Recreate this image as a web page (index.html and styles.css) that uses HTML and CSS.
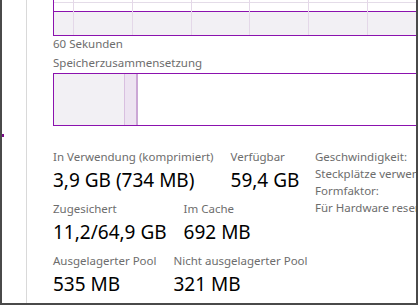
FILE: index.html
```html
<!DOCTYPE html>
<html lang="de">
<head>
<meta charset="utf-8">
<link rel="stylesheet" href="styles.css">
</head>
<body>
<div class="window">
  <div class="sidebar"><span class="marker"></span></div>
  <div class="main">
    <div class="graph">
      <div class="grid-h"></div>
      <div class="usage"></div>
      <div class="vlines">
        <span style="left:19px"></span>
        <span style="left:78px"></span>
        <span style="left:137px"></span>
        <span style="left:195px"></span>
        <span style="left:254px"></span>
        <span style="left:313px"></span>
      </div>
    </div>
    <div class="caption">60 Sekunden</div>
    <div class="caption">Speicherzusammensetzung</div>
    <div class="composition">
      <div class="seg used"></div>
      <div class="seg modified"></div>
    </div>
    <div class="stats">
      <div class="left">
        <div class="row">
          <div class="item"><div class="label">In Verwendung (komprimiert)</div><div class="value">3,9 GB (734 MB)</div></div>
          <div class="item"><div class="label">Verfügbar</div><div class="value">59,4 GB</div></div>
        </div>
        <div class="row">
          <div class="item"><div class="label">Zugesichert</div><div class="value">11,2/64,9 GB</div></div>
          <div class="item"><div class="label">Im Cache</div><div class="value">692 MB</div></div>
        </div>
        <div class="row">
          <div class="item"><div class="label">Ausgelagerter Pool</div><div class="value">535 MB</div></div>
          <div class="item"><div class="label">Nicht ausgelagerter Pool</div><div class="value">321 MB</div></div>
        </div>
      </div>
      <div class="right">
        <div class="label">Geschwindigkeit:</div>
        <div class="label">Steckplätze verwendet:</div>
        <div class="label">Formfaktor:</div>
        <div class="label">Für Hardware reserviert:</div>
      </div>
    </div>
  </div>
</div>
</body>
</html>
```
FILE: styles.css
```css
html, body {
  margin: 0;
  padding: 0;
  background: #ffffff;
}
.window {
  width: 418px;
  height: 305px;
  box-sizing: border-box;
  display: flex;
  overflow: hidden;
  border-left: 2px solid #4a4a4a;
  border-right: 2px solid #4a4a4a;
  border-bottom: 2px solid #4a4a4a;
  font-family: "Noto Sans", "Open Sans", sans-serif;
  background: #fff;
}
.sidebar {
  width: 24px;
  flex: none;
  border-right: 1px solid #d9d9d9;
  position: relative;
}
.marker {
  position: absolute;
  left: 0;
  top: 134px;
  width: 2px;
  height: 3px;
  background: #7a0a8a;
}
.main {
  flex: 1;
  min-width: 0;
  padding-left: 26px;
  overflow: hidden;
}
.graph {
  position: relative;
  height: 35px;
  width: 400px;
  border-left: 1px solid #8b12ae;
  border-bottom: 1px solid #8b12ae;
  background: #fff;
}
.grid-h {
  height: 2px;
  border-bottom: 1px solid #e4dce8;
}
.usage {
  position: absolute;
  left: 0;
  right: 0;
  top: 11px;
  bottom: 0;
  background: #f2f0f4;
  border-top: 1px solid #8b12ae;
}
.vlines span {
  position: absolute;
  top: 0;
  bottom: 0;
  width: 1px;
  background: #e4d8e8;
}
.caption {
  font-size: 11.5px;
  color: #6d6d6d;
  line-height: 16px;
}
.caption:first-of-type {
  margin-top: 3px;
}
.caption + .caption {
  margin-top: 3px;
}
.composition {
  margin-top: 2px;
  height: 51px;
  width: 400px;
  border: 1px solid #8b12ae;
  display: flex;
}
.seg.used {
  width: 70px;
  background: #f2f0f4;
}
.seg.modified {
  width: 11px;
  background: #ede3f1;
  border-left: 1px solid #d9bfe0;
  border-right: 2px solid #cba6d5;
}
.stats {
  margin-top: 23px;
  display: grid;
  grid-template-columns: 262px auto;
}
.row {
  display: flex;
  gap: 17px;
  margin-bottom: 6px;
}
.label {
  font-size: 11.5px;
  color: #6d6d6d;
  line-height: 16px;
  white-space: nowrap;
}
.value {
  font-size: 19px;
  line-height: 30px;
  color: #000;
  white-space: nowrap;
}
.right .label {
  line-height: 18px;
  margin-top: -1px;
}
```
